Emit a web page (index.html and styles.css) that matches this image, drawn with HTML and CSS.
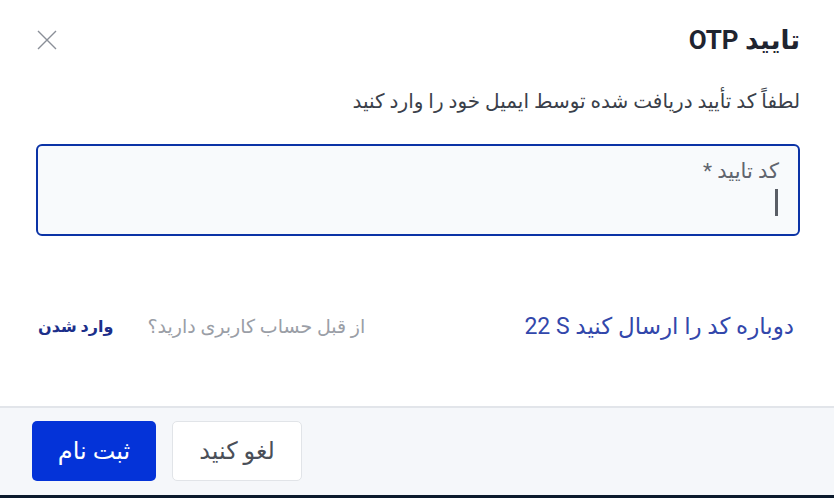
FILE: index.html
```html
<!DOCTYPE html>
<html lang="fa" dir="rtl">
<head>
    <meta charset="UTF-8">
    <meta name="viewport" content="width=device-width, initial-scale=1.0">
    <title>تایید OTP</title>
    <link rel="stylesheet" href="styles.css">
</head>
<body>
    <div class="dialog">
        <div class="dialog-body">
            <div class="dialog-header">
                <h2 class="dialog-title">تایید OTP</h2>
                <button class="close-button" aria-label="بستن">
                    <svg width="20" height="20" viewBox="0 0 20 20">
                        <path d="M1 1 L19 19 M19 1 L1 19" stroke="#8a8f98" stroke-width="1.4" fill="none"/>
                    </svg>
                </button>
            </div>
            <p class="dialog-text">لطفاً کد تأیید دریافت شده توسط ایمیل خود را وارد کنید</p>
            <div class="otp-field">
                <label class="otp-label">کد تایید *</label>
                <span class="otp-caret"></span>
            </div>
            <div class="links-row">
                <a class="resend-link" href="#">دوباره کد را ارسال کنید <span class="timer">22 S</span></a>
                <div class="login-hint">
                    <span class="hint-text">از قبل حساب کاربری دارید؟</span>
                    <a class="login-link" href="#">وارد شدن</a>
                </div>
            </div>
        </div>
        <div class="dialog-footer">
            <button class="btn btn-cancel">لغو کنید</button>
            <button class="btn btn-submit">ثبت نام</button>
        </div>
    </div>
</body>
</html>
```

FILE: styles.css
```css
* {
    box-sizing: border-box;
    margin: 0;
    padding: 0;
}

body {
    height: 100vh;
    background: #0b1a2c;
    font-family: Roboto, "DejaVu Sans", sans-serif;
    overflow: hidden;
}

.dialog {
    width: 834px;
    height: 495px;
    background: #fff;
    display: flex;
    flex-direction: column;
}

/* بدنه */
.dialog-body {
    height: 406px;
    padding: 0 34px 0 35px;
}

.dialog-header {
    height: 80px;
    display: flex;
    justify-content: space-between;
    align-items: center;
}

.dialog-title {
    font-size: 26px;
    font-weight: 700;
    color: #1f2430;
}

.close-button {
    background: none;
    border: none;
    width: 20px;
    height: 20px;
    margin-left: 2px;
    display: flex;
    cursor: pointer;
}

.dialog-text {
    font-size: 20px;
    line-height: 28px;
    margin-top: 7px;
    color: #3a3f4a;
}

/* فیلد کد */
.otp-field {
    margin-top: 29px;
    margin-left: 1px;
    height: 92px;
    border: 2.5px solid #0b33a6;
    border-radius: 6px;
    background: #f8fafc;
    padding: 11px 19px 0;
    display: flex;
    flex-direction: column;
    align-items: flex-start;
}

.otp-label {
    font-size: 21px;
    line-height: 28px;
    color: #60656e;
}

.otp-caret {
    width: 3px;
    height: 27px;
    margin-top: 4px;
    margin-right: 1px;
    background: #5a5e66;
}

/* لینک ها */
.links-row {
    margin-top: 75px;
    height: 30px;
    display: flex;
    justify-content: space-between;
    align-items: center;
    padding-right: 6px;
}

.resend-link {
    font-size: 23px;
    color: #3247ab;
    text-decoration: none;
}

.timer {
    direction: ltr;
    unicode-bidi: isolate;
}

.login-hint {
    display: flex;
    align-items: center;
    gap: 34px;
    margin-left: 3px;
}

.hint-text {
    font-size: 19px;
    color: #9a9ea6;
}

.login-link {
    font-size: 16px;
    font-weight: 700;
    color: #1c2f8a;
    text-decoration: none;
}

/* فوتر */
.dialog-footer {
    flex: 1;
    background: #f5f7fa;
    border-top: 2px solid #e2e5ea;
    display: flex;
    justify-content: flex-end;
    align-items: flex-start;
    gap: 16px;
    padding: 13px 32px 0;
}

.btn {
    height: 60px;
    border-radius: 5px;
    font-family: inherit;
    font-size: 24px;
    cursor: pointer;
}

.btn-cancel {
    width: 130px;
    background: #fff;
    border: 1px solid #e1e4e8;
    color: #4a4f58;
}

.btn-submit {
    width: 124px;
    background: #0433d8;
    border: none;
    color: #fff;
}
```
